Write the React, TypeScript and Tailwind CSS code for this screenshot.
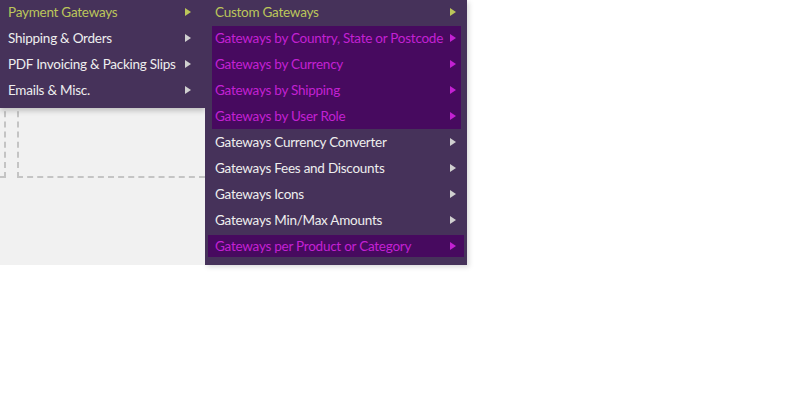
const mainItems = [
  { label: 'Payment Gateways', active: true },
  { label: 'Shipping & Orders' },
  { label: 'PDF Invoicing & Packing Slips' },
  { label: 'Emails & Misc.' },
];

const groupItems = [
  'Gateways by Country, State or Postcode',
  'Gateways by Currency',
  'Gateways by Shipping',
  'Gateways by User Role',
];

const plainItems = [
  'Gateways Currency Converter',
  'Gateways Fees and Discounts',
  'Gateways Icons',
  'Gateways Min/Max Amounts',
];

function Arrow({ color }: { color: string }) {
  return (
    <svg width="6" height="8" viewBox="0 0 6 8" className="shrink-0">
      <path d="M0 0 L6 4 L0 8 Z" fill={color} />
    </svg>
  );
}

export default function App() {
  return (
    <div
      className="w-[800px] h-[400px] bg-white flex items-start text-[13.5px] tracking-[-0.25px]"
      style={{ fontFamily: 'Lato, "Open Sans", sans-serif' }}
    >
      {/* left column: page content with the main flyout over it */}
      <div className="relative w-[205px] h-[265px] bg-[#f1f1f1] overflow-hidden">
        <div className="flex">
          <div className="w-[6px] h-[178px] border-r-2 border-b-2 border-dashed border-[#c4c4c4]" />
          <div className="ml-[11px] flex-1 h-[178px] border-l-2 border-b-2 border-dashed border-[#c4c4c4]" />
        </div>

        <ul className="absolute top-0 left-0 w-[205px] bg-[#46325a] shadow-[0_3px_5px_rgba(0,0,0,0.2)] pb-[4px]">
          {mainItems.map((item) => (
            <li
              key={item.label}
              className={`h-[26px] pl-[8px] pr-[14px] pb-[2px] flex items-center justify-between ${
                item.active ? 'text-[#bcc65a]' : 'text-[#eeeeee]'
              }`}
            >
              <span className="whitespace-nowrap">{item.label}</span>
              <Arrow color={item.active ? '#bcc65a' : '#d0d0d0'} />
            </li>
          ))}
        </ul>
      </div>

      {/* submenu */}
      <ul className="w-[262px] h-[265px] bg-[#46325a] shadow-[2px_2px_5px_rgba(0,0,0,0.15)]">
        <li className="h-[26px] pl-[10px] pr-[11px] pb-[2px] flex items-center justify-between text-[#bcc65a]">
          <span className="whitespace-nowrap">Custom Gateways</span>
          <Arrow color="#bcc65a" />
        </li>
        <li className="ml-[7px] mr-[6px] h-[103px] bg-[#470a5f] flex flex-col">
          {groupItems.map((label) => (
            <div
              key={label}
              className="flex-1 pl-[3px] pr-[5px] pb-[1px] flex items-center justify-between text-[#c321d3]"
            >
              <span className="whitespace-nowrap">{label}</span>
              <Arrow color="#c321d3" />
            </div>
          ))}
        </li>
        {plainItems.map((label) => (
          <li
            key={label}
            className="h-[26px] pl-[10px] pr-[11px] flex items-center justify-between text-[#eeeeee]"
          >
            <span className="whitespace-nowrap">{label}</span>
            <Arrow color="#d0d0d0" />
          </li>
        ))}
        <li className="h-[26px] px-[3px] flex items-center">
          <div className="w-full h-[22px] bg-[#470a5f] pl-[7px] pr-[8px] flex items-center justify-between text-[#c321d3]">
            <span className="whitespace-nowrap">Gateways per Product or Category</span>
            <Arrow color="#c321d3" />
          </div>
        </li>
      </ul>
    </div>
  );
}
